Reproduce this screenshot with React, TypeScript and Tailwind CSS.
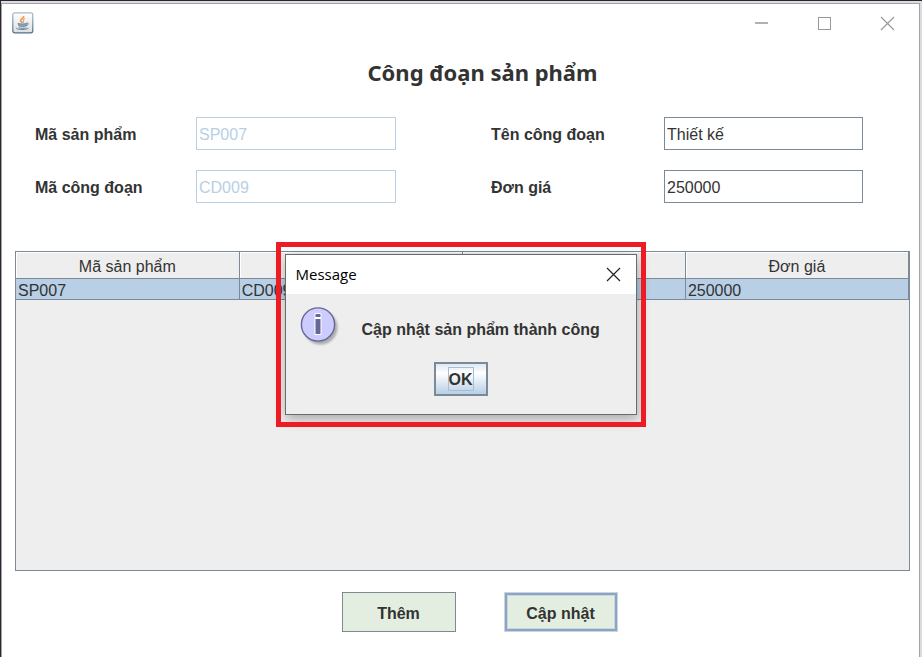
import type { InputHTMLAttributes } from "react";

const columns = [
  { key: "product", title: "Mã sản phẩm" },
  { key: "stage", title: "" },
  { key: "name", title: "" },
  { key: "price", title: "Đơn giá" },
];
const rows = [{ product: "SP007", stage: "CD009", name: "", price: "250000" }];

function JavaIcon() {
  return (
    <svg viewBox="0 0 22 22" className="size-[22px]" aria-hidden="true">
      <defs>
        <linearGradient id="tile" x1="0" y1="0" x2="0" y2="1">
          <stop offset="0" stopColor="#ffffff" />
          <stop offset="1" stopColor="#dedfe0" />
        </linearGradient>
        <linearGradient id="rim" x1="0" y1="0" x2="0" y2="1">
          <stop offset="0" stopColor="#a9bccb" />
          <stop offset="1" stopColor="#4b6c87" />
        </linearGradient>
      </defs>
      <rect x="0.8" y="0.8" width="20" height="20" rx="2" fill="url(#tile)" stroke="url(#rim)" strokeWidth="1.2" />
      <path d="M11.6 4C12.4 6 8.4 6.8 8.6 8.6C8.7 9.7 10 10 10.4 11" fill="none" stroke="#f0944a" strokeWidth="1.6" />
      <path d="M13 6.6C11.4 7.4 10.8 8.2 11.6 9.4C12 10 11.4 10.6 11 11" fill="none" stroke="#f0a060" strokeWidth="1.1" />
      <path d="M6 11.2C8 12.2 12.6 12.2 14.6 11.2L14 13.8C13 15 7.8 15 6.8 13.8Z" fill="#8aa3b8" stroke="#6485a0" strokeWidth="0.8" />
      <path d="M14.6 11.2C17 10.4 17 13 14 13.8" fill="none" stroke="#6485a0" strokeWidth="1" />
      <path d="M4.6 15.8C3 17.8 13.6 18.2 16.6 16.2M6.4 15.8C8.6 16.6 12 16.6 14.4 15.8" fill="none" stroke="#6485a0" strokeWidth="1" />
    </svg>
  );
}

function InfoIcon() {
  return (
    <svg viewBox="0 0 40 40" className="size-10" aria-hidden="true">
      <defs>
        <filter id="soft" x="-20%" y="-20%" width="140%" height="140%">
          <feGaussianBlur stdDeviation="1.2" />
        </filter>
      </defs>
      <circle cx="20.5" cy="21.5" r="17" fill="#888" opacity="0.65" filter="url(#soft)" />
      <circle cx="18" cy="18.5" r="16.6" fill="#ccccff" stroke="#666699" strokeWidth="1.4" />
      <path d="M15 7.5H21V11.5H15ZM15 12.5H21V28.5H15Z" fill="#666699" stroke="#ffffff" />
    </svg>
  );
}

type FieldProps = InputHTMLAttributes<HTMLInputElement> & { id: string; label: string };

function Field({ id, label, ...input }: FieldProps) {
  return (
    <>
      <label htmlFor={id} className="pt-[2px] font-bold">
        {label}
      </label>
      <input
        id={id}
        className="h-[33px] w-full border border-[#7a8a99] bg-white px-[2px] pt-[2px] outline-none disabled:border-[#b8cfe5] disabled:text-[#b8cfe5]"
        {...input}
      />
    </>
  );
}

function MessageDialog() {
  return (
    <div className="absolute inset-x-0 top-[238px] flex justify-center">
      <div className="relative px-[9px] pt-3 pb-3 after:pointer-events-none after:absolute after:inset-0 after:border-5 after:border-[#ed1c24]">
        <section
          role="dialog"
          aria-labelledby="dialog-title"
          className="w-[352px] border border-[#6b6b6b] bg-[#eeeeee] shadow-[1px_4px_12px_rgba(0,0,0,0.3)]"
        >
          <header className="flex h-[39px] items-center justify-between bg-white pr-[15px] pl-[10px]">
            <h2 id="dialog-title" className="font-['Open_Sans','Noto_Sans',sans-serif] text-[15px] text-black">
              Message
            </h2>
            <button type="button" aria-label="Close dialog">
              <svg viewBox="0 0 15 15" className="size-[15px]" aria-hidden="true">
                <path d="M1 1L14 14M14 1L1 14" stroke="#222" strokeWidth="1.2" />
              </svg>
            </button>
          </header>
          <div className="flex h-[68px] items-start gap-[22px] pt-3 pl-[14px]">
            <InfoIcon />
            <p className="pt-3 font-bold">Cập nhật sản phẩm thành công</p>
          </div>
          <div className="flex h-[52px] justify-center">
            <button
              type="button"
              className="flex h-[34px] w-[54px] items-center justify-center border-2 border-[#7a8a99] bg-linear-to-b from-[#dde8f3] via-white via-30% to-[#b8cfe5] font-bold"
            >
              <span className="border border-[#a9bfd5] pt-[2px] leading-5">OK</span>
            </button>
          </div>
        </section>
      </div>
    </div>
  );
}

export default function App() {
  return (
    <div className="min-h-screen border-t border-l border-[#2c272e] bg-[#dedbe0] pt-[2px] pr-[2px] font-['Liberation_Sans',Arial,sans-serif] text-base text-[#333333]">
      <main className="relative min-h-[654px] border-x border-t border-[#a5a2a7] bg-white">
        <header className="flex h-[38px] items-center justify-between pr-[24px] pl-[10px]">
          <JavaIcon />
          <div className="flex items-center gap-[48px] text-[#999999]">
            <button type="button" aria-label="Minimize">
              <svg viewBox="0 0 15 15" className="size-[15px]" aria-hidden="true">
                <path d="M1 7H14" stroke="currentColor" strokeWidth="1.5" />
              </svg>
            </button>
            <button type="button" aria-label="Maximize">
              <svg viewBox="0 0 15 15" className="size-[15px]" aria-hidden="true">
                <rect x="1.5" y="1.5" width="12" height="12" fill="none" stroke="currentColor" />
              </svg>
            </button>
            <button type="button" aria-label="Close">
              <svg viewBox="0 0 15 15" className="size-[15px]" aria-hidden="true">
                <path d="M1 1L14 14M14 1L1 14" stroke="currentColor" strokeWidth="1.2" />
              </svg>
            </button>
          </div>
        </header>

        <h1 className="mt-[14px] pl-11 text-center font-['Noto_Sans','Open_Sans',sans-serif] text-[22px] leading-8 font-bold">
          Công đoạn sản phẩm
        </h1>

        <form className="mt-[29px] grid grid-cols-[161px_200px_1fr_173px_199px] items-center gap-y-5 pr-[56px] pl-[33px]">
          <Field id="product-code" label="Mã sản phẩm" defaultValue="SP007" disabled />
          <span />
          <Field id="stage-name" label="Tên công đoạn" defaultValue="Thiết kế" />
          <Field id="stage-code" label="Mã công đoạn" defaultValue="CD009" disabled />
          <span />
          <Field id="unit-price" label="Đơn giá" defaultValue="250000" />
        </form>

        <div className="mt-12 mr-[9px] ml-[13px] h-[320px] border border-[#7a8a99] bg-[#eeeeee]">
          <table className="w-full table-fixed border-collapse">
            <thead>
              <tr className="h-[26px]">
                {columns.map(({ key, title }) => (
                  <th
                    key={key}
                    className="border-r border-b border-[#7a8a99] p-0 pt-1 leading-[21px] font-normal shadow-[inset_1px_1px_0_#ffffff]"
                  >
                    {title}
                  </th>
                ))}
              </tr>
            </thead>
            <tbody>
              {rows.map((row) => (
                <tr key={row.product} className="h-[21px] bg-[#b8cfe5]">
                  <td className="border-r border-b border-[#7a8a99] p-0 pt-[3px] pl-[2px] leading-[17px]">{row.product}</td>
                  <td className="border-r border-b border-[#7a8a99] p-0 pt-[3px] pl-[2px] leading-[17px]">{row.stage}</td>
                  <td className="border-r border-b border-[#7a8a99] p-0 pt-[3px] pl-[2px] leading-[17px]">{row.name}</td>
                  <td className="border-r border-b border-[#7a8a99] p-0 pt-[3px] pl-[2px] leading-[17px]">{row.price}</td>
                </tr>
              ))}
            </tbody>
          </table>
        </div>

        <div className="mt-[21px] flex justify-center gap-12 pl-[38px]">
          <button type="button" className="h-10 w-[114px] border border-[#7a8a99] bg-[#e3eee1] pt-1 font-bold">
            Thêm
          </button>
          <button
            type="button"
            className="h-10 w-[114px] border border-[#c5d7e6] bg-[#e3eee1] pt-1 font-bold shadow-[inset_0_0_0_2px_#8ea5bd,inset_0_0_0_3px_#c5d7e6]"
          >
            Cập nhật
          </button>
        </div>

        <MessageDialog />
      </main>
    </div>
  );
}
